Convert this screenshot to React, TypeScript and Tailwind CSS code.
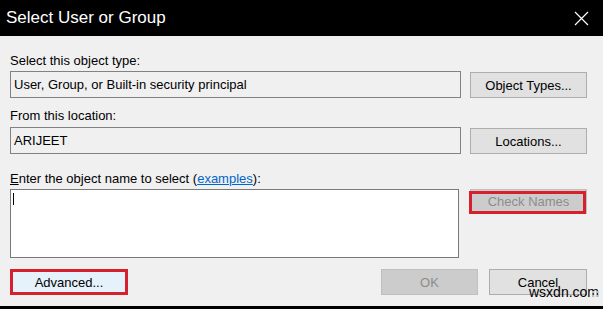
import React from 'react'

const font = { fontFamily: '"Liberation Sans", Arial, sans-serif' }

function Btn({ children, disabled, className = '' }: { children: React.ReactNode; disabled?: boolean; className?: string }) {
  return (
    <div
      className={
        'flex items-center justify-center border text-[13px] leading-none ' +
        (disabled
          ? 'border-[#bfbfbf] bg-[#cccccc] text-[#8c8c8c] '
          : 'border-[#adadad] bg-[#e1e1e1] text-black ') +
        className
      }
    >
      {children}
    </div>
  )
}

export default function App() {
  return (
    <div className="relative flex h-[309px] w-[603px] flex-col overflow-hidden bg-[#f0f0f0]" style={font}>
      {/* title bar */}
      <div className="flex h-[36px] shrink-0 items-center justify-between bg-black pl-[6px] pr-[14px] text-white">
        <span className="text-[17px]">Select User or Group</span>
        <svg width="15" height="15" viewBox="0 0 15 15">
          <path d="M1 1 L14 14 M14 1 L1 14" stroke="white" strokeWidth="1.2" />
        </svg>
      </div>

      <div className="flex flex-1 flex-col pl-[10px] pr-[16px] text-[13px] text-black">
        <div className="mt-[17px] h-[16px] leading-[16px]">Select this object type:</div>
        <div className="mt-[2px] flex items-end">
          <div className="flex h-[27px] w-[451px] items-center border border-[#828282] bg-[#f0f0f0] px-[3px]">
            User, Group, or Built-in security principal
          </div>
          <Btn className="ml-[9px] h-[26px] w-[117px]">Object Types...</Btn>
        </div>

        <div className="mt-[10px] h-[16px] leading-[16px]">From this location:</div>
        <div className="mt-[3px] flex items-end">
          <div className="flex h-[27px] w-[451px] items-center border border-[#828282] bg-[#f0f0f0] px-[3px]">
            ARIJEET
          </div>
          <Btn className="ml-[9px] h-[26px] w-[117px]">Locations...</Btn>
        </div>

        <div className="mt-[17px] h-[16px] leading-[16px]">
          <span className="underline">E</span>nter the object name to select (
          <span className="text-[#0066cc] underline">examples</span>):
        </div>
        <div className="mt-[2px] flex items-start">
          <div className="relative h-[69px] w-[449px] border border-[#7a7a7a] bg-white">
            <div className="ml-[2px] mt-[3px] h-[12px] w-px bg-black" />
          </div>
          <div className="relative ml-[11px]">
            <Btn disabled className="h-[25px] w-[117px]">Check Names</Btn>
            <div className="absolute left-[-1px] top-[2px] h-[23px] w-[117px] border-[3px] border-[#d7202d]" />
          </div>
        </div>

        <div className="mt-[11px] flex items-center">
          <div className="flex h-[26px] w-[118px] items-center justify-center border-[3px] border-[#d7202d] bg-[#e5f1fb] text-[13px] leading-none">
            Advanced...
          </div>
          <Btn disabled className="ml-[253px] h-[26px] w-[97px]">OK</Btn>
          <Btn className="ml-[11px] h-[26px] w-[98px]">Cancel</Btn>
        </div>
      </div>

      <div className="h-[3px] shrink-0 bg-black" />

      {/* watermark */}
      <div className="absolute left-[529px] top-[285px] text-[14px] leading-none text-black">wsxdn.com</div>
      <div className="absolute left-[592px] top-[291px] grid grid-cols-2 gap-[2px]">
        <div className="h-[2px] w-[2px] bg-[#bbbbbb]" />
        <div className="h-[2px] w-[2px] bg-[#bbbbbb]" />
        <div className="h-[2px] w-[2px] bg-[#bbbbbb]" />
        <div className="h-[2px] w-[2px] bg-[#bbbbbb]" />
      </div>
    </div>
  )
}
